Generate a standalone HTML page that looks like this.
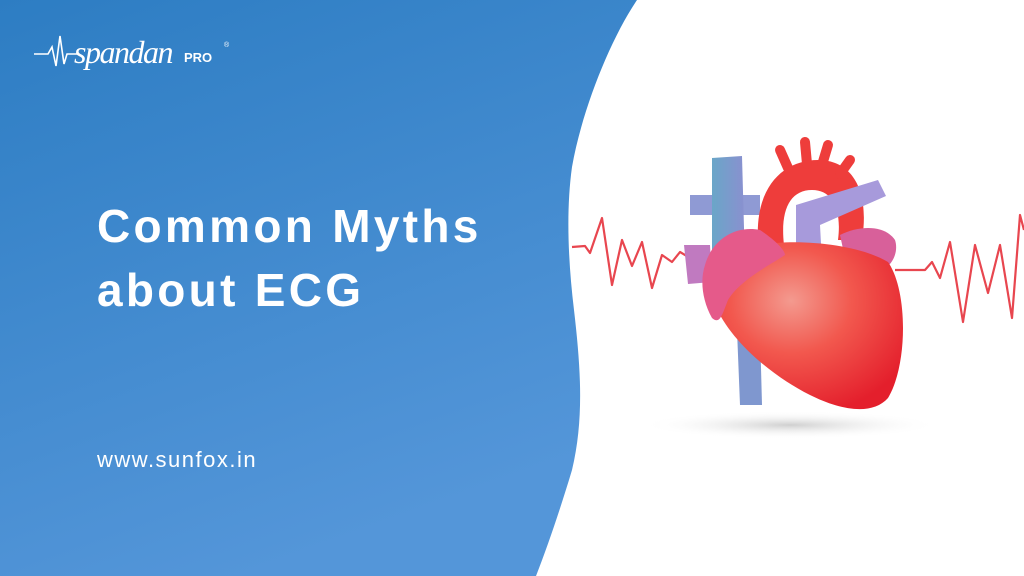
<!DOCTYPE html>
<html><head><meta charset="utf-8"><style>
html,body{margin:0;padding:0}
body{width:1024px;height:576px;position:relative;overflow:hidden;background:#fff;font-family:"Liberation Sans",sans-serif}
svg{position:absolute;left:0;top:0}
.t{position:absolute;color:#fff}
</style></head><body>
<svg width="1024" height="576" viewBox="0 0 1024 576">
<defs>
<linearGradient id="bg" x1="0" y1="0" x2="0.4" y2="1"><stop offset="0" stop-color="#2d7dc3"/><stop offset="1" stop-color="#5496d9"/></linearGradient>
<radialGradient id="hr" cx="0.42" cy="0.35" r="0.7"><stop offset="0" stop-color="#f39a8f"/><stop offset="0.45" stop-color="#f2584e"/><stop offset="1" stop-color="#e41f2c"/></radialGradient>
<linearGradient id="vb" x1="0" y1="0" x2="1" y2="0"><stop offset="0" stop-color="#6aa6c8"/><stop offset="1" stop-color="#8b8fd0"/></linearGradient>
<radialGradient id="sh" cx="0.5" cy="0.5" r="0.5"><stop offset="0" stop-color="#cfcfcf"/><stop offset="1" stop-color="#fff" stop-opacity="0"/></radialGradient>
</defs>
<path d="M0 0H637C610 40 582 110 572 167C566 210 568 260 574 310C581 370 584 420 572 470C560 510 548 545 536 576H0Z" fill="url(#bg)"/>
<ellipse cx="790" cy="425" rx="150" ry="14" fill="url(#sh)"/>
<polyline fill="none" stroke="#e8464f" stroke-width="2.2" stroke-linejoin="round" points="572,247 585,246 590,253 602,218 612,285 622,240 632,266 642,242 652,288 662,255 672,262 680,252 690,258 700,250"/>
<polyline fill="none" stroke="#e8464f" stroke-width="2.2" stroke-linejoin="round" points="895,270 925,270 932,262 940,278 950,242 963,322 975,245 988,293 1000,245 1012,318 1020,215 1024,230"/>
<path d="M690 195L760 195L760 215L690 215Z" fill="#8f9ad4"/>
<path d="M712 158L742 156L746 300L712 300Z" fill="url(#vb)"/>
<path d="M737 330L760 330L762 405L740 405Z" fill="#7f97cf"/>
<path d="M684 245L710 245L712 282L688 284Z" fill="#c07ac0"/>
<path d="M758 240C755 185 785 160 818 160C852 160 870 190 862 240L838 240C842 208 832 190 812 190C790 190 780 210 784 245Z" fill="#ee3d3b"/>
<path d="M780 150l8 18M805 142l2 22M828 145l-6 20M850 160l-10 14" fill="none" stroke="#ee3d3b" stroke-width="10" stroke-linecap="round"/>
<path d="M796 205L878 180L886 196L820 225L822 262L796 262Z" fill="#a79adb"/>
<path d="M840 235C860 225 885 225 895 240C900 255 888 275 870 270L845 258Z" fill="#d8609a"/>
<path d="M760 245C800 238 860 245 888 262C908 290 908 365 888 398C872 416 840 410 810 395C770 375 730 340 715 305C700 275 720 252 760 245Z" fill="url(#hr)"/>
<path d="M705 265C712 240 735 225 760 230C775 240 785 250 785 255C770 265 740 280 728 300C722 315 720 325 712 318C702 300 700 280 705 265Z" fill="#e55a8a"/>
</svg>
<div class="t" style="left:34px;top:32px;width:210px;height:44px">
<svg width="60" height="44" viewBox="0 0 60 44" style="position:absolute;left:0;top:0"><polyline points="0,22 14,22 18,15 22,34 26,4 30,32 33,22 44,22" fill="none" stroke="#fff" stroke-width="1.6"/></svg>
<span style="position:absolute;left:40px;top:2px;font-family:'Liberation Serif',serif;font-style:italic;font-size:32px;letter-spacing:-1.5px">spandan</span>
<span style="position:absolute;left:150px;top:18px;font-weight:bold;font-size:13px">PRO</span>
<span style="position:absolute;left:190px;top:10px;font-size:7px">®</span>
</div>
<div class="t" style="left:97px;top:194px;font-size:46px;font-weight:bold;line-height:64px;letter-spacing:3.3px">Common Myths<br>about ECG</div>
<div class="t" style="left:97px;top:447px;font-size:22px;letter-spacing:1.5px">www.sunfox.in</div>
</body></html>
